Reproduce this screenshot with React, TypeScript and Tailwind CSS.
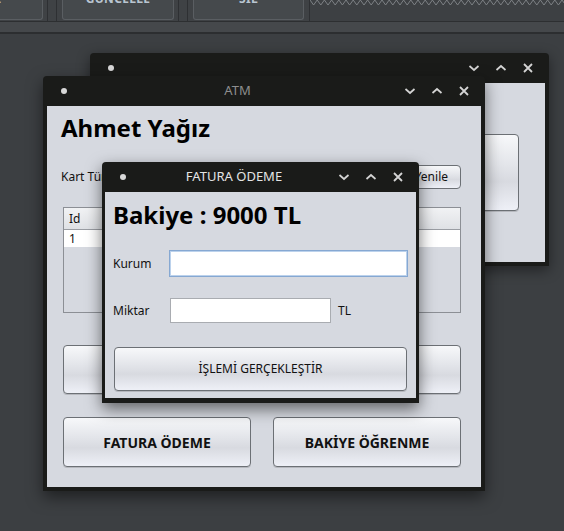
import React from "react";

const btn =
  "border border-[#6c7075] rounded-[4px] bg-[linear-gradient(180deg,#f7f8fa_0%,#e3e5ea_40%,#d8dae0_62%,#eef0f7_100%)] shadow-[0_1px_0_rgba(0,0,0,0.15)] flex items-center justify-center text-[#111]";

function Controls() {
  return (
    <div className="flex items-center gap-[15px] pr-[15px]">
      <svg width="12" height="12" viewBox="0 0 12 12">
        <polyline points="1.5,4 6,8 10.5,4" fill="none" stroke="#d4d4d4" strokeWidth="1.7" />
      </svg>
      <svg width="12" height="12" viewBox="0 0 12 12">
        <polyline points="1.5,8 6,4 10.5,8" fill="none" stroke="#d4d4d4" strokeWidth="1.7" />
      </svg>
      <svg width="12" height="12" viewBox="0 0 12 12">
        <path d="M2 2 L10 10 M10 2 L2 10" stroke="#d4d4d4" strokeWidth="1.8" />
      </svg>
    </div>
  );
}

function TitleBar({ title, active }: { title: string; active?: boolean }) {
  return (
    <div className="h-[30px] flex items-center shrink-0">
      <div className="w-[28px] flex items-center">
        <span className="ml-[18px] w-[6px] h-[6px] rounded-full bg-[#d8d8d8]" />
      </div>
      <div
        className={
          active
            ? "flex-1 text-center text-[13px] text-[#e4e4e4]"
            : "flex-1 text-center text-[13px] text-[#8e8e8e]"
        }
      >
        {title}
      </div>
      <Controls />
    </div>
  );
}

function TopStrip() {
  return (
    <div>
      <div className="h-[21px] bg-[#3f4245] flex items-start overflow-hidden">
        <div className="ml-[-69px] w-[112px] h-[20px] border border-t-0 border-[#5a5e62] rounded-b-[3px] bg-[#45494c] flex justify-center">
          <span className="mt-[-8px] text-[12px] leading-[14px] font-bold tracking-wide text-[#b9c5d1]">EKLE</span>
        </div>
        <div className="ml-[4px] w-[10px] h-[21px] border-x border-[#2e3033]" />
        <div className="ml-[5px] w-[112px] h-[20px] border border-t-0 border-[#5a5e62] rounded-b-[3px] bg-[#45494c] flex justify-center">
          <span className="mt-[-8px] text-[12px] leading-[14px] font-bold tracking-wide text-[#b9c5d1]">GÜNCELLE</span>
        </div>
        <div className="ml-[4px] w-[10px] h-[21px] border-x border-[#2e3033]" />
        <div className="ml-[5px] w-[111px] h-[20px] border border-t-0 border-[#5a5e62] rounded-b-[3px] bg-[#45494c] flex justify-center">
          <span className="mt-[-8px] text-[12px] leading-[14px] font-bold tracking-wide text-[#b9c5d1]">SİL</span>
        </div>
        <div className="ml-[5px] flex-1 h-[21px] border-l border-[#2e3033] bg-[#3d4043] overflow-hidden">
          <svg width="260" height="8" viewBox="0 0 260 8">
            <polyline
              points={Array.from({ length: 72 }, (_, i) => `${i * 3.6},${i % 2 === 0 ? 0 : 5}`).join(" ")}
              fill="none"
              stroke="#7d8185"
              strokeWidth="1"
            />
          </svg>
        </div>
      </div>
      <div className="h-[1px] bg-[#2d2f31]" />
      <div className="h-[12px] bg-[#45484b] border-b-2 border-[#2c2e30]" />
    </div>
  );
}

function BackWindow() {
  return (
    <div className="absolute left-[90px] top-[53px] w-[459px] h-[213px] bg-[#1a1b19] rounded-t-[4px] flex flex-col px-[4px] pb-[4px] shadow-[0_4px_14px_rgba(0,0,0,0.45)]">
      <div className="-mx-[4px]">
        <TitleBar title="" />
      </div>
      <div className="flex-1 bg-[#d6d9e0] flex justify-end items-start pt-[51px] pr-[26px]">
        <div className={btn + " w-[120px] h-[77px]"} />
      </div>
    </div>
  );
}

function AtmWindow() {
  return (
    <div className="absolute left-[43px] top-[76px] w-[442px] h-[415px] bg-[#1a1b19] rounded-t-[4px] flex flex-col px-[4px] pb-[4px] shadow-[0_6px_16px_rgba(0,0,0,0.5)]">
      <div className="-mx-[4px]">
        <TitleBar title="ATM" />
      </div>
      <div className="flex-1 bg-[#d6d9e0] pt-[6px] pl-[14px] pr-[20px] flex flex-col">
        <div className="h-[32px] leading-[32px] text-[24px] font-bold text-black">Ahmet Yağız</div>
        <div className="mt-[21px] h-[24px] flex items-center justify-between">
          <span className="text-[12px] text-[#111]">Kart Türü</span>
          <div className="w-[70px] h-[24px] border border-[#6c7075] rounded-[4px] bg-[linear-gradient(180deg,#f7f8fa_0%,#e3e5ea_40%,#d8dae0_62%,#eef0f7_100%)] flex items-center justify-end pr-[12px] text-[12px] text-[#111]">
            Yenile
          </div>
        </div>
        <div className="ml-[2px] mt-[18px] h-[106px] border border-[#8c8f95] bg-[#d6d9e0] flex flex-col">
          <div className="h-[22px] border-b border-[#9a9da3] bg-[linear-gradient(180deg,#f1f2f4,#dfe1e5)] flex items-center text-[12px] text-[#111]">
            <span className="pl-[5px] w-[70px] border-r border-[#b3b6bb]">Id</span>
          </div>
          <div className="h-[17px] bg-white flex items-center text-[12px] text-[#111] pl-[5px]">1</div>
        </div>
        <div className="ml-[2px] mt-[32px] flex gap-[22px]">
          <div className={btn + " w-[188px] h-[49px] text-[14px] font-bold"}>PARA ÇEKME</div>
          <div className={btn + " w-[188px] h-[49px] text-[14px] font-bold"}>PARA YATIRMA</div>
        </div>
        <div className="ml-[2px] mt-[23px] flex gap-[22px]">
          <div className={btn + " w-[188px] h-[50px] text-[14px] font-bold"}>FATURA ÖDEME</div>
          <div className={btn + " w-[188px] h-[50px] text-[14px] font-bold"}>BAKİYE ÖĞRENME</div>
        </div>
      </div>
    </div>
  );
}

function FaturaDialog() {
  return (
    <div className="absolute left-[102px] top-[162px] w-[317px] h-[241px] bg-[#1a1b19] rounded-t-[4px] flex flex-col px-[3px] pb-[5px] shadow-[0_6px_16px_rgba(0,0,0,0.55)]">
      <div className="-mx-[3px]">
        <TitleBar title="FATURA ÖDEME" active />
      </div>
      <div className="flex-1 bg-[#d6d9e0] pl-[8px] pt-[7px] flex flex-col">
        <div className="h-[32px] leading-[32px] text-[24px] font-bold text-black">Bakiye : 9000 TL</div>
        <div className="mt-[19px] h-[27px] flex items-center">
          <span className="w-[56px] text-[12px] text-[#111]">Kurum</span>
          <div className="w-[239px] h-[27px] bg-white border border-[#86a8d2] shadow-[inset_0_0_0_1px_#bcd2ec]" />
        </div>
        <div className="mt-[21px] h-[25px] flex items-center">
          <span className="w-[57px] text-[12px] text-[#111]">Miktar</span>
          <div className="w-[161px] h-[25px] bg-white border border-[#a9acb1]" />
          <span className="ml-[7px] text-[12px] text-[#111]">TL</span>
        </div>
        <div className={btn + " ml-[1px] mt-[24px] w-[293px] h-[44px] text-[12px]"}>İŞLEMİ GERÇEKLEŞTİR</div>
      </div>
    </div>
  );
}

export default function App() {
  return (
    <div className="relative w-[564px] h-[531px] overflow-hidden bg-[#3c3f42] font-['Noto_Sans',sans-serif]">
      <TopStrip />
      <BackWindow />
      <AtmWindow />
      <FaturaDialog />
    </div>
  );
}
